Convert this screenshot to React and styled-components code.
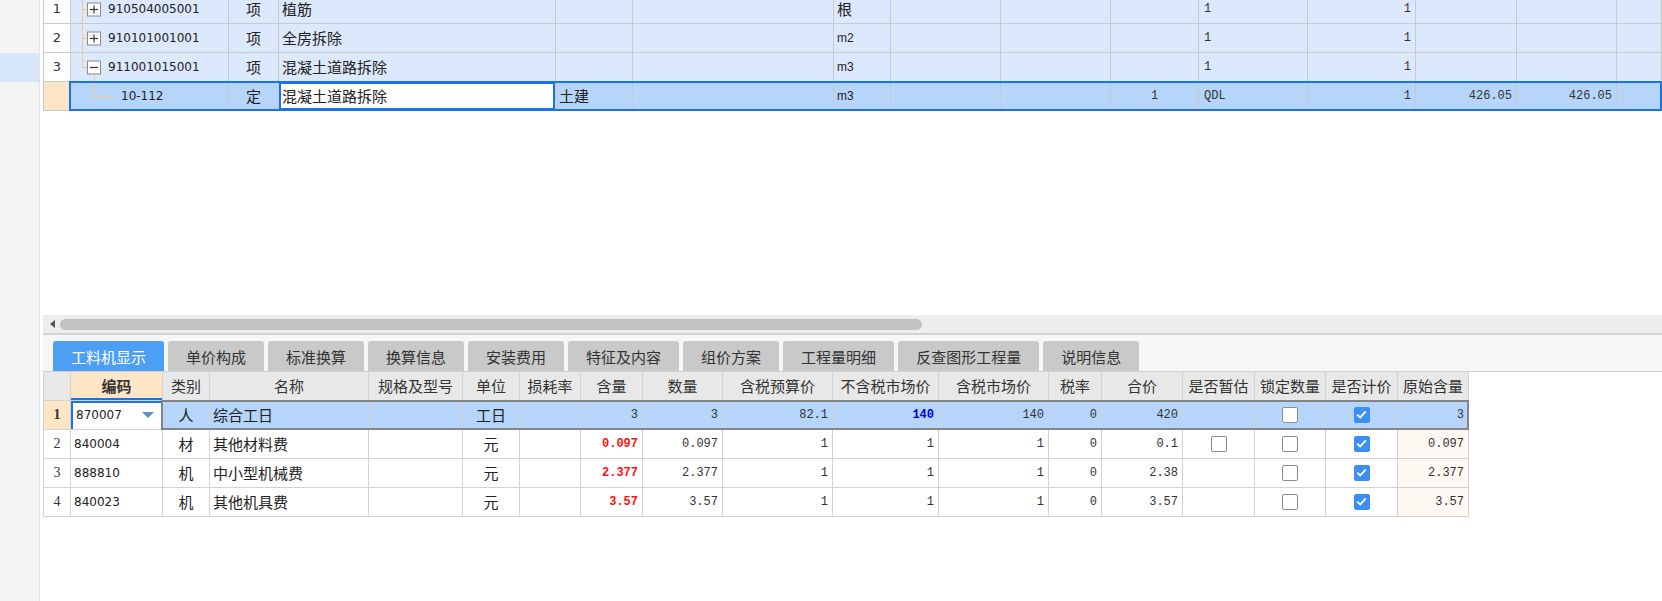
import React from "react";
import styled, { createGlobalStyle } from "styled-components";

const GlobalStyle = createGlobalStyle`
  html, body {
    margin: 0;
    padding: 0;
    background: #ffffff;
  }
  body {
    font-family: "Noto Sans CJK SC", "Noto Sans", sans-serif;
    color: #222;
  }
`;

const topColumns =
  "27px 158px 50px 277px 77px 201px 57px 110px 110px 88px 109px 108px 101px 100px 1fr";
const bottomColumns =
  "27px 92px 47px 159px 94px 57px 61px 62px 80px 110px 106px 110px 53px 81px 72px 71px 72px 71px";

const Page = styled.div`
  display: flex;
  width: 1662px;
  height: 601px;
  overflow: hidden;
`;

const Rail = styled.aside`
  flex: none;
  width: 39px;
  padding-top: 53px;
  background: #f4f4f4;
  border-right: 1px solid #e3e3e3;
`;

const RailMark = styled.div`
  height: 29px;
  background: #d7e7f9;
`;

const Main = styled.main`
  flex: 1;
  min-width: 0;
  padding-left: 3px;
  display: flex;
  flex-direction: column;
`;

const TopPane = styled.section`
  height: 315px;
  overflow: hidden;
`;

const TopRows = styled.div`
  margin-top: -5px;
`;

const Row = styled.div`
  position: relative;
  display: grid;
  grid-template-columns: ${(p) => p.$cols};
  width: ${(p) => (p.$fit ? "max-content" : "auto")};
  height: 29px;
  border-left: 1px solid ${(p) => p.$line || "#c9c9c9"};
  &::after {
    content: "";
    display: ${(p) => (p.$outline ? "block" : "none")};
    position: absolute;
    left: ${(p) => p.$outlineLeft || 25}px;
    right: 0;
    top: -1px;
    bottom: 0;
    border: 2px solid ${(p) => p.$outline};
    pointer-events: none;
  }
`;

const Cell = styled.div`
  box-sizing: border-box;
  display: flex;
  align-items: center;
  justify-content: ${(p) =>
    p.$align === "right" ? "flex-end" : p.$align === "center" ? "center" : "flex-start"};
  padding: 0 ${(p) => (p.$align === "right" ? 4 : 3)}px 1px ${(p) => (p.$pl != null ? p.$pl : 3)}px;
  background: ${(p) => p.$bg || "#ffffff"};
  border-right: 1px solid ${(p) => p.$line || "#c9c9c9"};
  border-bottom: 1px solid ${(p) => p.$line || "#c9c9c9"};
  font-size: 15px;
  line-height: 1;
  font-weight: ${(p) => (p.$bold ? 700 : 400)};
  color: #222;
  white-space: nowrap;
  overflow: hidden;
  box-shadow: ${(p) => p.$shadow || "none"};
`;

const HeadCell = styled(Cell)`
  justify-content: center;
  padding: 0 0 1px;
  color: #333;
  background: ${(p) => p.$bg || "#e8e8e8"};
`;

const Code = styled.span`
  font-family: "DejaVu Sans", sans-serif;
  font-size: 12px;
  color: #222;
`;

const Unit = styled.span`
  font-family: "Liberation Sans", sans-serif;
  font-size: 12px;
`;

const Num = styled.span`
  font-family: "Liberation Mono", monospace;
  font-size: 12px;
  font-weight: ${(p) => (p.$bold ? 700 : 400)};
  color: ${(p) => p.$color || "#333"};
`;

const RowNo = styled.span`
  font-family: ${(p) => (p.$serif ? '"Liberation Serif", serif' : '"DejaVu Sans", sans-serif')};
  font-size: ${(p) => (p.$serif ? 14 : 13)}px;
  font-weight: ${(p) => (p.$bold ? 700 : 400)};
  color: #333;
`;

const ScrollTrack = styled.div`
  height: 18px;
  display: flex;
  align-items: center;
  gap: 5px;
  padding-left: 7px;
  background: #ededed;
  border-bottom: 2px solid #d2d2d2;
`;

const ScrollArrow = styled.span`
  width: 0;
  height: 0;
  border-top: 4px solid transparent;
  border-bottom: 4px solid transparent;
  border-right: 5px solid #555;
`;

const ScrollThumb = styled.div`
  width: 862px;
  height: 11px;
  border-radius: 6px;
  background: #c2c2c2;
`;

const TabBar = styled.nav`
  height: 30px;
  padding: 6px 0 0 10px;
  display: flex;
  align-items: flex-end;
  gap: 4px;
  background: #f6f6f6;
  border-bottom: 1px solid #d0d0d0;
`;

const Tab = styled.div`
  height: 30px;
  padding: 0 18px;
  display: flex;
  align-items: center;
  border-radius: 3px 3px 0 0;
  font-size: 15px;
  color: ${(p) => (p.$active ? "#ffffff" : "#333")};
  background: ${(p) => (p.$active ? "#4c9ff5" : "#c9c9c9")};
`;

const Box = styled.span`
  box-sizing: border-box;
  width: 16px;
  height: 16px;
  border-radius: 2px;
  border: 1px solid ${(p) => (p.$checked ? "#3d8ef2" : "#8c8c8c")};
  background: ${(p) => (p.$checked ? "#3d8ef2" : "#ffffff")};
  display: flex;
  align-items: center;
  justify-content: center;
`;

const DropArrow = styled.span`
  margin-left: auto;
  margin-right: 5px;
  width: 0;
  height: 0;
  border-left: 6px solid transparent;
  border-right: 6px solid transparent;
  border-top: 6px solid #5b8fc6;
`;

const TREE = "#f3c88c";

const TreeMark = ({ kind, top, bottom }) => {
  if (kind === "child") {
    return (
      <svg width="50" height="28" style={{ flex: "none" }}>
        <line x1="23.5" y1="0" x2="23.5" y2="14.5" stroke={TREE} />
        <line x1="23.5" y1="14.5" x2="44" y2="14.5" stroke={TREE} />
      </svg>
    );
  }
  return (
    <svg width="37" height="28" style={{ flex: "none" }}>
      <line x1="11.5" y1={top ? 0 : 14} x2="11.5" y2={bottom ? 28 : 14.5} stroke={TREE} />
      <line x1="11.5" y1="14.5" x2="16" y2="14.5" stroke={TREE} />
      {kind === "minus" && <line x1="23.5" y1="21" x2="23.5" y2="28" stroke={TREE} />}
      <rect x="16.5" y="8" width="13" height="13" fill="#fff" stroke="#8a8a8a" />
      <line x1="19" y1="14.5" x2="27" y2="14.5" stroke="#333" strokeWidth="1.2" />
      {kind === "plus" && <line x1="23" y1="10.5" x2="23" y2="18.5" stroke="#333" strokeWidth="1.2" />}
    </svg>
  );
};

const Check = ({ checked }) => (
  <Box $checked={checked}>
    {checked && (
      <svg width="11" height="9" viewBox="0 0 11 9">
        <path d="M1.2 4.6 L4.2 7.4 L9.8 1.4" fill="none" stroke="#fff" strokeWidth="1.8" />
      </svg>
    )}
  </Box>
);

const BLUE_ROW = "#dce8fb";
const SEL = "#b5d5fb";
const PEACH = "#fde5c6";

const topRows = [
  { no: "1", tree: "plus", top: true, bottom: true, code: "910504005001", name: "植筋", unit: "根" },
  { no: "2", tree: "plus", top: true, bottom: true, code: "910101001001", name: "全房拆除", unit: "m2" },
  { no: "3", tree: "minus", top: true, bottom: false, code: "911001015001", name: "混凝土道路拆除", unit: "m3" },
];

const TopRow = ({ row }) => (
  <Row $cols={topColumns}>
    <Cell $align="center">
      <RowNo>{row.no}</RowNo>
    </Cell>
    <Cell $bg={BLUE_ROW} $pl={0}>
      <TreeMark kind={row.tree} top={row.top} bottom={row.bottom} />
      <Code>{row.code}</Code>
    </Cell>
    <Cell $bg={BLUE_ROW} $align="center">项</Cell>
    <Cell $bg={BLUE_ROW}>{row.name}</Cell>
    <Cell $bg={BLUE_ROW} />
    <Cell $bg={BLUE_ROW} />
    <Cell $bg={BLUE_ROW}>{row.unit === "根" ? row.unit : <Unit>{row.unit}</Unit>}</Cell>
    <Cell $bg={BLUE_ROW} />
    <Cell $bg={BLUE_ROW} />
    <Cell $bg={BLUE_ROW} />
    <Cell $bg={BLUE_ROW} $pl={5}>
      <Num>1</Num>
    </Cell>
    <Cell $bg={BLUE_ROW} $align="right">
      <Num>1</Num>
    </Cell>
    <Cell $bg={BLUE_ROW} />
    <Cell $bg={BLUE_ROW} />
    <Cell $bg={BLUE_ROW} />
  </Row>
);

const SelectedTopRow = () => (
  <Row $cols={topColumns} $outline="#1873ec" $outlineLeft={25}>
    <Cell $bg={PEACH} />
    <Cell $bg={SEL} $pl={0}>
      <TreeMark kind="child" />
      <Code>10-112</Code>
    </Cell>
    <Cell $bg={SEL} $align="center">定</Cell>
    <Cell $bg="#ffffff" $shadow="inset 0 0 0 2px #1873ec">混凝土道路拆除</Cell>
    <Cell $bg={SEL}>土建</Cell>
    <Cell $bg={SEL} />
    <Cell $bg={SEL}>
      <Unit>m3</Unit>
    </Cell>
    <Cell $bg={SEL} />
    <Cell $bg={SEL} />
    <Cell $bg={SEL} $align="center">
      <Num>1</Num>
    </Cell>
    <Cell $bg={SEL} $pl={5}>
      <Num>QDL</Num>
    </Cell>
    <Cell $bg={SEL} $align="right">
      <Num>1</Num>
    </Cell>
    <Cell $bg={SEL} $align="right">
      <Num>426.05</Num>
    </Cell>
    <Cell $bg={SEL} $align="right">
      <Num>426.05</Num>
    </Cell>
    <Cell $bg={SEL} />
  </Row>
);

const headers = [
  "",
  "编码",
  "类别",
  "名称",
  "规格及型号",
  "单位",
  "损耗率",
  "含量",
  "数量",
  "含税预算价",
  "不含税市场价",
  "含税市场价",
  "税率",
  "合价",
  "是否暂估",
  "锁定数量",
  "是否计价",
  "原始含量",
];

const items = [
  {
    no: "1", code: "870007", kind: "人", name: "综合工日", unit: "工日",
    content: "3", qty: "3", budget: "82.1", market: "140", taxed: "140", rate: "0",
    total: "420", est: null, orig: "3",
  },
  {
    no: "2", code: "840004", kind: "材", name: "其他材料费", unit: "元",
    content: "0.097", qty: "0.097", budget: "1", market: "1", taxed: "1", rate: "0",
    total: "0.1", est: false, orig: "0.097",
  },
  {
    no: "3", code: "888810", kind: "机", name: "中小型机械费", unit: "元",
    content: "2.377", qty: "2.377", budget: "1", market: "1", taxed: "1", rate: "0",
    total: "2.38", est: null, orig: "2.377",
  },
  {
    no: "4", code: "840023", kind: "机", name: "其他机具费", unit: "元",
    content: "3.57", qty: "3.57", budget: "1", market: "1", taxed: "1", rate: "0",
    total: "3.57", est: null, orig: "3.57",
  },
];

const LINE = "#d2d2d2";

const ItemRow = ({ item, active }) => {
  const bg = active ? SEL : "#ffffff";
  return (
    <Row
      $cols={bottomColumns}
      $fit
      $line={LINE}
      $outline={active ? "#858585" : null}
      $outlineLeft={117}
    >
      <Cell $line={LINE} $align="center" $bg={active ? PEACH : "#ffffff"}>
        <RowNo $serif $bold={active}>{item.no}</RowNo>
      </Cell>
      <Cell
        $line={LINE}
        $bg="#ffffff"
        $shadow={active ? "inset 2px 2px 0 #1873ec" : "none"}
        $pl={active ? 5 : 3}
      >
        <Code>{item.code}</Code>
        {active && <DropArrow />}
      </Cell>
      <Cell $line={LINE} $bg={bg} $align="center">{item.kind}</Cell>
      <Cell $line={LINE} $bg={bg}>{item.name}</Cell>
      <Cell $line={LINE} $bg={bg} />
      <Cell $line={LINE} $bg={bg} $align="center">{item.unit}</Cell>
      <Cell $line={LINE} $bg={bg} />
      <Cell $line={LINE} $bg={bg} $align="right">
        <Num $bold={!active} $color={active ? "#333" : "#ff1010"}>{item.content}</Num>
      </Cell>
      <Cell $line={LINE} $bg={bg} $align="right">
        <Num>{item.qty}</Num>
      </Cell>
      <Cell $line={LINE} $bg={bg} $align="right">
        <Num>{item.budget}</Num>
      </Cell>
      <Cell $line={LINE} $bg={bg} $align="right">
        <Num $bold={active} $color={active ? "#0000ee" : "#333"}>{item.market}</Num>
      </Cell>
      <Cell $line={LINE} $bg={bg} $align="right">
        <Num>{item.taxed}</Num>
      </Cell>
      <Cell $line={LINE} $bg={bg} $align="right">
        <Num>{item.rate}</Num>
      </Cell>
      <Cell $line={LINE} $bg={bg} $align="right">
        <Num>{item.total}</Num>
      </Cell>
      <Cell $line={LINE} $bg={bg} $align="center">
        {item.est === false && <Check />}
      </Cell>
      <Cell $line={LINE} $bg={bg} $align="center">
        <Check />
      </Cell>
      <Cell $line={LINE} $bg={bg} $align="center">
        <Check checked />
      </Cell>
      <Cell $line={LINE} $bg={active ? SEL : "#fdf9f2"} $align="right">
        <Num>{item.orig}</Num>
      </Cell>
    </Row>
  );
};

const tabs = [
  "工料机显示",
  "单价构成",
  "标准换算",
  "换算信息",
  "安装费用",
  "特征及内容",
  "组价方案",
  "工程量明细",
  "反查图形工程量",
  "说明信息",
];

const BottomPane = styled.section`
  flex: 1;
`;

export default function App() {
  return (
    <Page>
      <GlobalStyle />
      <Rail>
        <RailMark />
      </Rail>
      <Main>
        <TopPane>
          <TopRows>
            {topRows.map((row) => (
              <TopRow key={row.no} row={row} />
            ))}
            <SelectedTopRow />
          </TopRows>
        </TopPane>
        <ScrollTrack>
          <ScrollArrow />
          <ScrollThumb />
        </ScrollTrack>
        <TabBar>
          {tabs.map((t, i) => (
            <Tab key={t} $active={i === 0}>
              {t}
            </Tab>
          ))}
        </TabBar>
        <BottomPane>
          <Row $cols={bottomColumns} $fit $line={LINE}>
            {headers.map((h, i) => (
              <HeadCell
                key={i}
                $line={LINE}
                $bg={i === 1 ? PEACH : "#e8e8e8"}
                $bold={i === 1}
                $shadow={i === 1 ? "inset 0 -2px 0 #1873ec" : "none"}
              >
                {h}
              </HeadCell>
            ))}
          </Row>
          {items.map((item, i) => (
            <ItemRow key={item.no} item={item} active={i === 0} />
          ))}
        </BottomPane>
      </Main>
    </Page>
  );
}
